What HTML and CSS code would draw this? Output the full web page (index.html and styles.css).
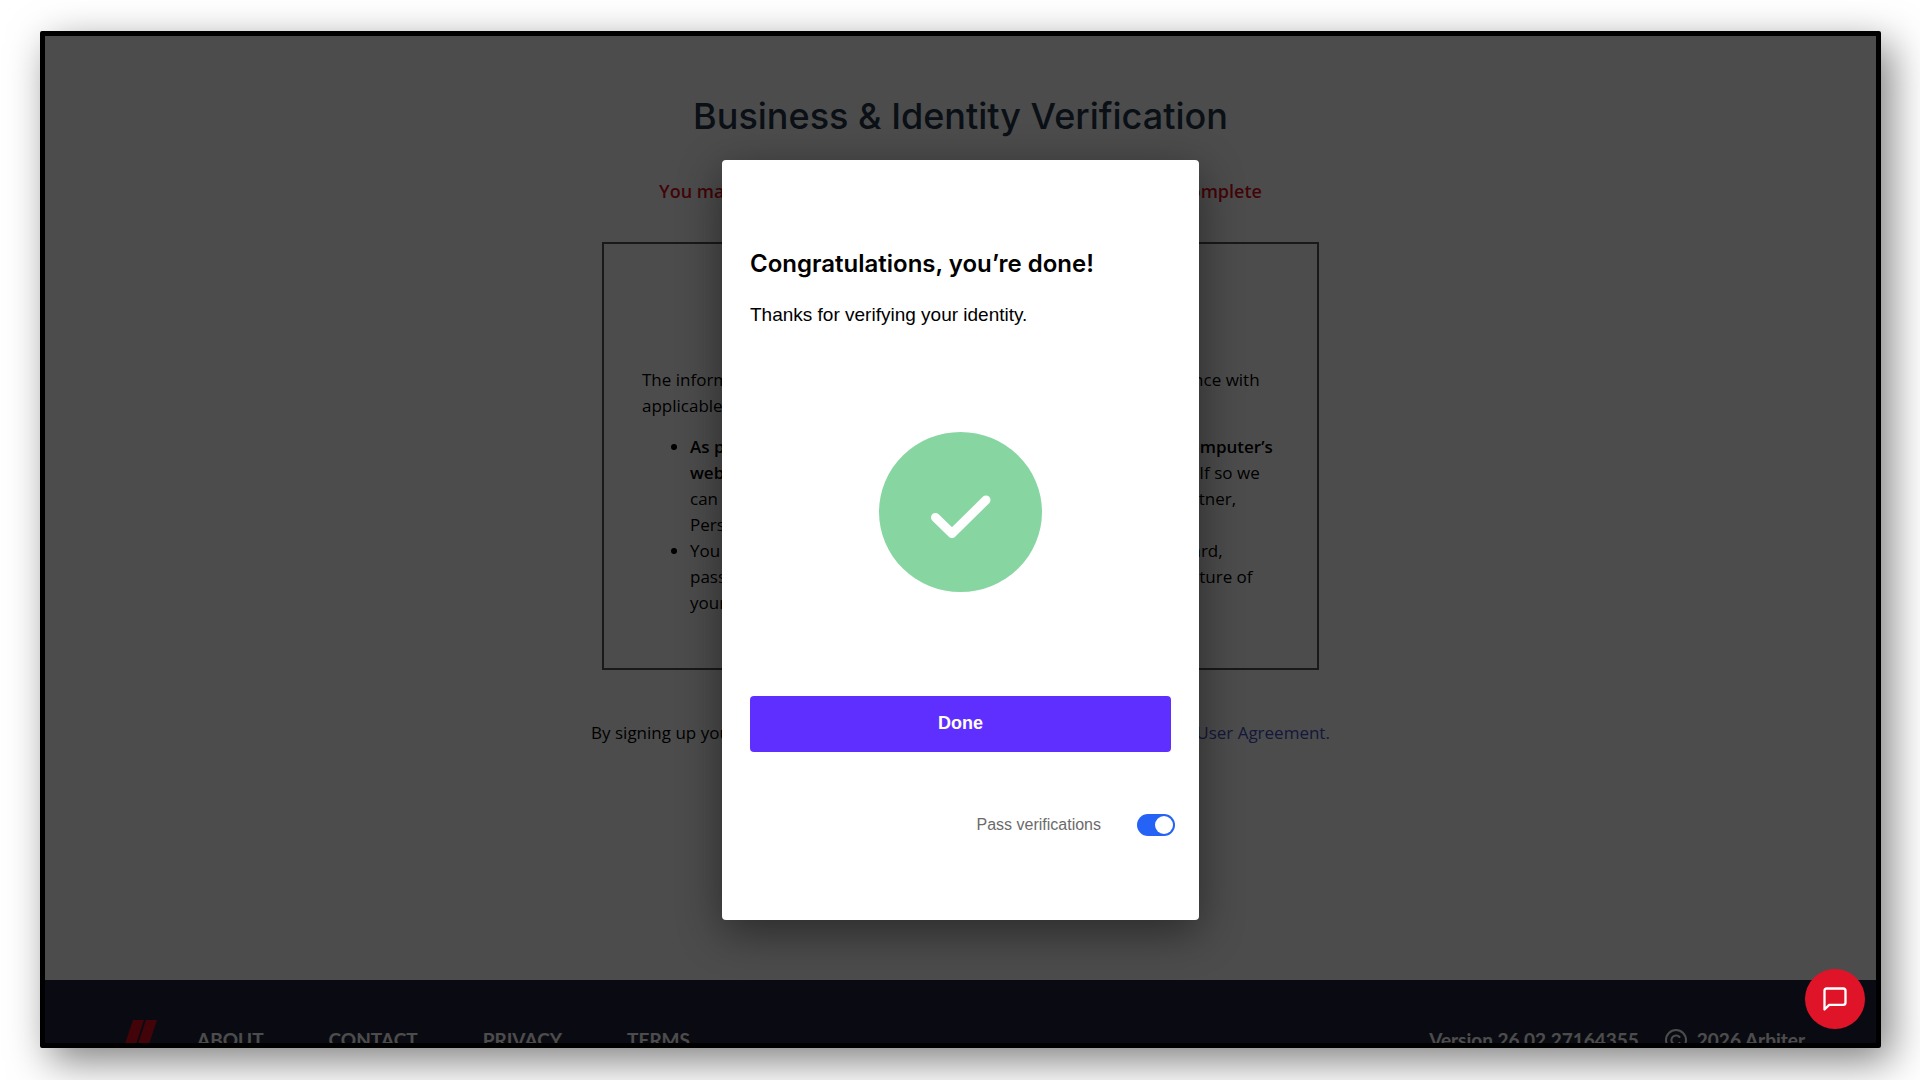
FILE: index.html
```html
<!DOCTYPE html>
<html lang="en">
    <head>
        <meta charset="utf-8">
        <title>Business &amp; Identity Verification</title>
        <link rel="stylesheet" href="styles.css">
    </head>
    <body>
        <div class="window">
            <main>
                <h1>Business &amp; Identity Verification</h1>
                <p class="warning">You may not leave this screen until all of your verification is complete</p>

                <section class="info-box">
                    <p>The information requested below will be securely collected in accordance with<br>
                    applicable laws and regulations.</p>
                    <ul>
                        <li><strong>As part of this process, we may need to directly access your computer’s<br>
                            webcam.</strong> You may also be required to inform us about yourself. If so we<br>
                            can confirm that you are either an Owner, Secretary, Officer, Partner,<br>
                            Person.</li>
                        <li>You will need your valid photo ID, such as your state issued ID card,<br>
                            passport or driver’s license. You will also need to take a quick picture of<br>
                            yourself.</li>
                    </ul>
                </section>

                <p class="terms">By signing up you confirm that you have read and that you also agree to our <a href="#">User Agreement.</a></p>
            </main>

            <footer>
                <svg class="logo" width="40" height="40" viewBox="0 0 40 40" aria-hidden="true">
                    <path d="M9 0h11L8 36H-3zM22 0h11L21 36H10z" fill="#e01020"/>
                    <path d="M24 23h7v3h-7z" fill="#fff"/>
                </svg>
                <nav>
                    <a href="#">ABOUT</a>
                    <a href="#">CONTACT</a>
                    <a href="#">PRIVACY</a>
                    <a href="#">TERMS</a>
                </nav>
                <span class="version">Version 26.02.27164355</span>
                <svg class="copyright" width="22" height="22" viewBox="0 0 22 22" fill="none" stroke="#fff" stroke-width="2" aria-hidden="true">
                    <circle cx="11" cy="11" r="10"/>
                    <path d="M14.5 8a4.6 4.6 0 1 0 0 6" stroke-linecap="round"/>
                </svg>
                <span>2026 Arbiter</span>
            </footer>

            <div class="overlay">
                <div class="modal" role="dialog" aria-labelledby="modal-title">
                    <h2 id="modal-title">Congratulations, you’re done!</h2>
                    <p>Thanks for verifying your identity.</p>
                    <svg class="success" width="163" height="160" viewBox="0 0 163 160" aria-hidden="true">
                        <ellipse cx="81.5" cy="80" rx="81.5" ry="80" fill="#87d6a1"/>
                        <path d="M56.5 85.5L73 101.5L107 68" fill="none" stroke="#fff" stroke-width="9" stroke-linecap="round" stroke-linejoin="round"/>
                    </svg>
                    <button class="done">Done</button>
                    <div class="switch-row">
                        <label for="pass">Pass verifications</label>
                        <input type="checkbox" id="pass" class="switch" checked>
                    </div>
                </div>
            </div>

            <button class="chat" aria-label="Open chat">
                <svg width="28" height="28" viewBox="0 0 24 24" fill="none" stroke="#fff" stroke-width="2" stroke-linecap="round" stroke-linejoin="round">
                    <path d="M21 15a2 2 0 0 1-2 2H7l-4 4V5a2 2 0 0 1 2-2h14a2 2 0 0 1 2 2z"/>
                </svg>
            </button>
        </div>
    </body>
</html>
```
FILE: styles.css
```css
* { box-sizing: border-box; }

body {
    margin: 0;
    padding: 31px 39px 32px 40px;
    height: 100vh;
    overflow: hidden;
    background: #fff;
    color: #000;
    font-family: "Open Sans", "Noto Sans", sans-serif;
    font-size: 17px;
    line-height: 26px;
}

h1, h2, p, ul { margin: 0; }

.window {
    position: relative;
    display: flex;
    flex-direction: column;
    height: 100%;
    overflow: hidden;
    border: 5px solid #000;
    border-radius: 2px;
    box-shadow: 10px 13px 40px rgba(0, 0, 0, .5);
}

main {
    flex: 1;
    display: flex;
    flex-direction: column;
    align-items: center;
    padding-top: 58px;
    white-space: nowrap;
}

h1 {
    margin-bottom: 40px;
    color: #22374a;
    font-family: Inter, sans-serif;
    font-weight: 500;
    font-size: 36px;
    line-height: 44px;
}

.warning {
    margin-bottom: 38px;
    color: #e01020;
    font-weight: 600;
    font-size: 18px;
}

.info-box {
    width: 717px;
    padding: 123px 36px 52px 38px;
    border: 2px solid #555;
}
.info-box ul {
    margin-top: 15px;
    padding-left: 48px;
}
.info-box strong { font-weight: 600; }

.terms { margin-top: 50px; }
.terms a {
    color: #4353c4;
    text-decoration: none;
}

footer {
    flex: 0 0 63px;
    display: flex;
    align-items: center;
    height: 63px;
    padding: 56px 71px 0 79px;
    background: #22243c;
    color: #fff;
    font-family: Lato, sans-serif;
    font-weight: 700;
    font-size: 19px;
}
footer svg { flex: none; }
footer nav {
    flex: 1;
    display: flex;
    gap: 65px;
    margin-left: 33px;
}
footer a {
    color: #fff;
    text-decoration: none;
}
.logo { overflow: visible; }
.copyright { margin: 0 10px 0 26px; }

.overlay {
    position: absolute;
    inset: 0;
    display: flex;
    align-items: center;
    justify-content: center;
    background: rgba(0, 0, 0, .7);
}

.modal {
    display: flex;
    flex-direction: column;
    width: 477px;
    padding: 89px 28px 82px;
    border-radius: 4px;
    background: #fff;
    box-shadow: 0 12px 44px rgba(0, 0, 0, .45);
    font-family: "Liberation Sans", Arial, sans-serif;
}
.modal h2 {
    margin-bottom: 23px;
    font-family: Inter, sans-serif;
    font-weight: 600;
    font-size: 24px;
    line-height: 30px;
}
.modal p { font-size: 19px; }

.success {
    align-self: center;
    margin-top: 104px;
}

.done {
    height: 56px;
    margin-top: 104px;
    border: 0;
    border-radius: 4px;
    background: #5f2fff;
    color: #fff;
    font-family: inherit;
    font-weight: 700;
    font-size: 18px;
}

.switch-row {
    display: flex;
    align-items: center;
    justify-content: flex-end;
    gap: 36px;
    margin: 60px -4px 0 0;
    color: #6b6b6b;
    font-size: 16px;
}

.switch {
    appearance: none;
    display: flex;
    align-items: center;
    justify-content: flex-end;
    width: 38px;
    height: 22px;
    margin: 0;
    padding: 0 2px;
    border-radius: 11px;
    background: #2463f5;
}
.switch::before {
    content: "";
    width: 18px;
    height: 18px;
    border-radius: 50%;
    background: #fff;
}

.chat {
    position: absolute;
    right: 11px;
    bottom: 14px;
    display: flex;
    align-items: center;
    justify-content: center;
    width: 60px;
    height: 60px;
    padding: 0;
    border: 0;
    border-radius: 50%;
    background: #e01428;
}
```
